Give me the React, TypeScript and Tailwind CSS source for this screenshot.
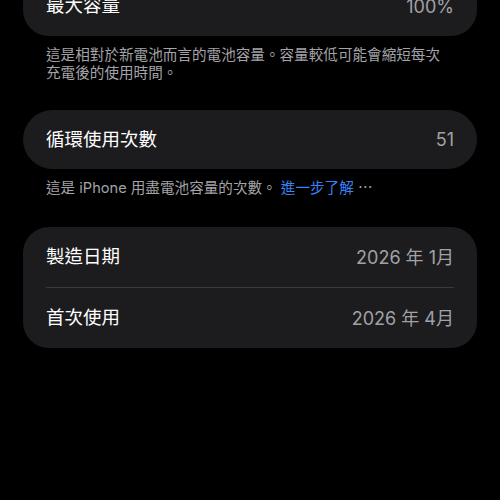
import React from 'react';

const font = { fontFamily: '"Inter", "Noto Sans CJK TC", sans-serif' };

const Row: React.FC<{ label: string; value: string }> = ({ label, value }) => (
  <div className="flex items-center justify-between h-[60px]">
    <span className="text-[18.5px] text-white">{label}</span>
    <span className="text-[18px] text-[#a1a1a6]">{value}</span>
  </div>
);

export default function App() {
  return (
    <div className="w-[500px] h-[500px] bg-black overflow-hidden" style={font}>
      <div className="px-[23px]">
        <div className="-mt-[24px] bg-[#1c1c1e] rounded-[26px] px-[23px]">
          <Row label="最大容量" value="100%" />
        </div>

        <div className="mt-[10px] px-[23px] text-[14.6px] leading-[18px] text-[#a3a3a8]">
          <div>這是相對於新電池而言的電池容量。容量較低可能會縮短每次</div>
          <div>充電後的使用時間。</div>
        </div>

        <div className="mt-[28px] bg-[#1c1c1e] rounded-[30px] px-[23px]">
          <div className="flex items-center justify-between h-[59px]">
            <span className="text-[18.5px] text-white">循環使用次數</span>
            <span className="text-[18px] text-[#a1a1a6]">51</span>
          </div>
        </div>

        <div className="mt-[10px] px-[23px] text-[14.6px] leading-[18px] text-[#a3a3a8]">
          這是 iPhone 用盡電池容量的次數。 <span className="text-[#3a82f6]">進一步了解</span> ⋯
        </div>

        <div className="mt-[30px] bg-[#1c1c1e] rounded-[26px] px-[23px]">
          <Row label="製造日期" value="2026 年 1月" />
          <div className="h-px bg-[#3a3a3c]" />
          <Row label="首次使用" value="2026 年 4月" />
        </div>
      </div>
    </div>
  );
}
